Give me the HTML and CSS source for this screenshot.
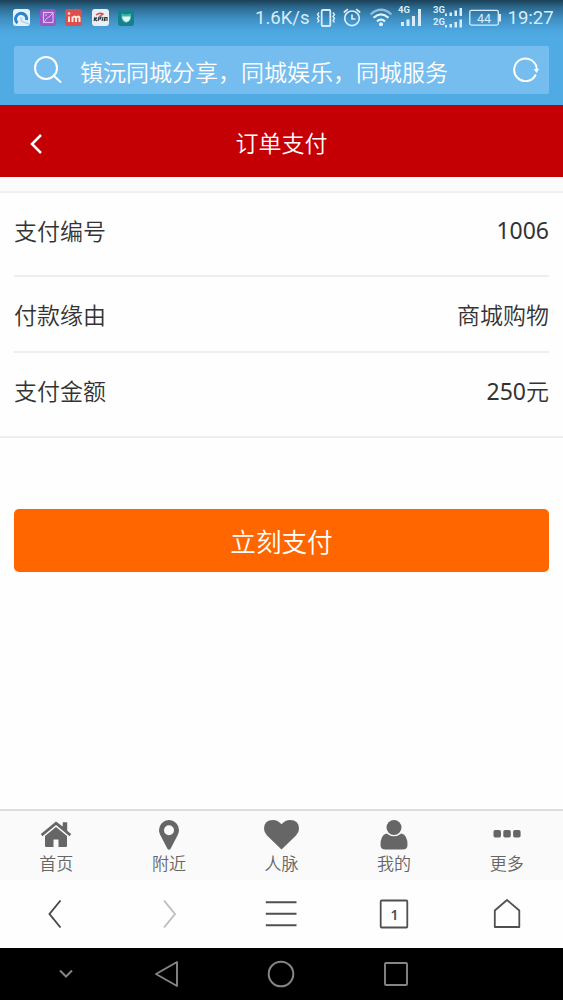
FILE: index.html
```html
<!DOCTYPE html>
<html lang="zh-CN">
<head>
<meta charset="utf-8">
<title>订单支付</title>
<link rel="stylesheet" href="styles.css">
</head>
<body>
<div class="phone">
  <header class="browser-top">
    <div class="status">
      <div class="apps">
        <svg width="17" height="17" viewBox="0 0 17 17"><rect width="17" height="17" rx="3" fill="#e4f1f9"/><path d="M4.500 14A5.500 5.500 0 1 1 13.500 11" fill="none" stroke="#2c83c9" stroke-width="3"/><path d="M8 8.500a4 4 0 0 0 4 5l4 1.500" fill="none" stroke="#a9d3ef" stroke-width="1.500"/></svg>
        <svg width="16" height="17" viewBox="0 0 16 17"><rect width="16" height="17" rx="3" fill="#9c55c8"/><rect x="3.500" y="3.500" width="9.500" height="10" fill="none" stroke="#deb9f0" stroke-width="1.200"/><path d="M4 13l3-4 2-1 4-4M5 6h2" fill="none" stroke="#deb9f0"/></svg>
        <svg width="17" height="17" viewBox="0 0 17 17"><rect width="17" height="17" rx="3" fill="#d9504f"/><path d="M4 7.500V13M7.500 13V7.500M7.500 9q2.500-3 3.500 0v4M11 9q3-3 3.500 0v4" fill="none" stroke="#ffe8df" stroke-width="2"/><circle cx="4" cy="4.500" r="1.200" fill="#ffe8df"/></svg>
        <svg width="17" height="17" viewBox="0 0 17 17"><rect width="17" height="17" rx="3" fill="#e9eff4"/><path d="M4 6q4-3 7-1l-3 2" fill="none" stroke="#d0494d" stroke-width="1.500"/><path d="M2 12l1-4m0 2.500 2-2m-2 2 2 1.500M6 12l1-4h2l-.5 2H7M10 12l1-4m2 0-1 4M13 12V8.500h2V12" fill="none" stroke="#28303a" stroke-width="1.100"/></svg>
        <svg width="16" height="17" viewBox="0 0 16 17"><rect width="16" height="17" rx="3" fill="#17808f"/><path d="M3.500 4.500 8 5.500l5-1V9q-1 4-5 5-4-1-4.500-5z" fill="#3fb7a8"/><path d="M4 7.500h8.500Q12 12.500 8 13 5 12 4 7.500z" fill="#e4f7f2"/></svg>
      </div>
      <span class="speed">1.6K/s</span>
      <svg class="vibrate" width="20" height="18" viewBox="0 0 20 18" fill="none" stroke="#d8edfa"><rect x="5.700" y="1" width="8.600" height="16" rx="1" stroke-width="1.800"/><path d="M3 3.500 1.500 5.500 3 7.500 1.500 9.500 3 11.500 1.500 13.500M17 3.500l1.500 2-1.500 2 1.500 2-1.500 2 1.500 2" stroke-width="1.400"/></svg>
      <svg class="alarm" width="18" height="19" viewBox="0 0 18 19" fill="none" stroke="#d8edfa" stroke-width="1.700"><circle cx="9" cy="10.300" r="7.300"/><path d="M9 6.500v4.500h3.500M.8 4.500l4-3.300M17.200 4.500l-4-3.300"/></svg>
      <svg class="wifi" width="24" height="19" viewBox="0 0 24 19" fill="none" stroke-width="2.200"><path d="M1.500 6.500Q12-3 22.500 6.500" stroke="#8fbddd"/><path d="M4.500 9.800Q12 3 19.500 9.800M8 13.300q4-3.500 8 0" stroke="#e4f4fd"/><circle cx="12" cy="16.200" r="2" fill="#e4f4fd"/></svg>
      <svg class="signal" width="25" height="24" viewBox="0 0 25 24" fill="#d8edfa"><text class="gen" x="0" y="9">4G</text><path d="M3 18h3v4H3zM8.500 15.500h3V22h-3zM14 12h3v10h-3zM20 5h3v17h-3z"/></svg>
      <svg class="dual" width="30" height="26" viewBox="0 0 30 26" fill="#d8edfa"><text class="gen" x="0" y="9">3G</text><text class="gen" x="0" y="20.500">2G</text><path d="M12 9.500h2V12h-2zM16.500 8.500h2.500V12h-2.500zM21.500 6.500H24V12h-2.500zM26.500 4H29v8h-2.500zM12 21h2v2.500h-2zM16.500 20h2.500v3.500h-2.500zM21.500 18H24v5.500h-2.500zM26.500 15.500H29v8h-2.500z"/></svg>
      <svg class="battery" width="33" height="18" viewBox="0 0 33 18"><rect x=".8" y="1.300" width="28.500" height="14.800" rx="1.500" fill="none" stroke="#d8edfa" stroke-width="1.300"/><path d="M31 5v7.500" stroke="#d8edfa" stroke-width="2"/><text class="charge" x="15" y="13.500">44</text></svg>
      <span class="clock">19:27</span>
    </div>
    <div class="search">
      <svg class="lens" width="30" height="30" viewBox="0 0 30 30" fill="none" stroke="#fff" stroke-width="2"><circle cx="13" cy="13" r="11"/><path d="M21 21l6.500 6" stroke-linecap="round"/></svg>
      <span class="query">镇沅同城分享，同城娱乐，同城服务</span>
      <svg class="reload" width="26" height="26" viewBox="0 0 26 26"><path d="M22.800 17.500A11.300 11.300 0 1 1 23.800 12.500" fill="none" stroke="#fff" stroke-width="1.900"/><path d="M20.800 12H26l-2.500 4z" fill="#fff"/></svg>
    </div>
  </header>
  <div class="title-bar">
    <svg class="back" width="14" height="22" viewBox="0 0 14 22" fill="none" stroke="#fff" stroke-width="2.500"><path d="M12 2 3 11l9 9"/></svg>
    <h1 class="title">订单支付</h1>
  </div>
  <main class="content">
    <div class="order">
      <div class="row row-id"><span>支付编号</span><span class="value">1006</span></div>
      <div class="row row-reason"><span>付款缘由</span><span>商城购物</span></div>
      <div class="row row-amount"><span>支付金额</span><span><span class="value">250</span>元</span></div>
    </div>
    <button class="pay">立刻支付</button>
  </main>
  <nav class="tabs">
    <div class="tab"><svg width="32" height="30" viewBox="0 0 32 30" fill="#666"><path d="M16 1.500 .8 14l1.600 2.200L16 5l13.600 11.200 1.600-2.200-4-3.300V2.300h-4.500v4.200z"/><path d="M16 7 5 16V26q0 1 1 1h7.500v-7.500h5V27H26q1 0 1-1V16z"/></svg><span>首页</span></div>
    <div class="tab"><svg width="20" height="30" viewBox="0 0 20 30"><path fill="#666" fill-rule="evenodd" d="M10 0A10 10 0 0 0 0 10q0 2.500 1 4.500l7.300 14q1.700 2.400 3.400 0l7.300-14q1-2 1-4.500A10 10 0 0 0 10 0zm0 5.200a5 5 0 1 1 0 10 5 5 0 0 1 0-10z"/></svg><span>附近</span></div>
    <div class="tab"><svg width="35" height="30" viewBox="0 0 35 30"><path fill="#666" d="M17.500 29.500 3 15.500Q0 12.500 0 8.800 0 0 9 0q4.800 0 8.500 4.300Q21.200 0 26 0q9 0 9 8.800 0 3.700-3 6.700z"/></svg><span>人脉</span></div>
    <div class="tab"><svg width="28" height="30" viewBox="0 0 28 30" fill="#666"><circle cx="14" cy="7.500" r="7.500"/><path d="M6.500 13.500Q14 19 21.500 13.500 27.500 15 27.500 25q0 4.500-5 4.500h-17q-5 0-5-4.500 0-10 6-11.500z"/></svg><span>我的</span></div>
    <div class="tab"><svg width="28" height="30" viewBox="0 0 28 30" fill="#666"><rect x=".5" y="10" width="7.500" height="7.500" rx="1.700"/><rect x="10.300" y="10" width="7.500" height="7.500" rx="1.700"/><rect x="20.100" y="10" width="7.500" height="7.500" rx="1.700"/></svg><span>更多</span></div>
  </nav>
  <nav class="tools">
    <svg class="tool" width="32" height="32" viewBox="0 0 32 32" fill="none" stroke="#484848" stroke-width="1.900"><path d="M20.500 2.500 9.500 16l11 13.500"/></svg>
    <svg class="tool" width="32" height="32" viewBox="0 0 32 32" fill="none" stroke="#bebebe" stroke-width="1.900"><path d="M11 2.500 22 16 11 29.500"/></svg>
    <svg class="tool" width="32" height="32" viewBox="0 0 32 32" fill="none" stroke="#505050" stroke-width="2"><path d="M.8 4.200h30.700M.8 15.700h30.700M.8 27.200h30.700"/></svg>
    <svg class="tool" width="32" height="32" viewBox="0 0 32 32"><rect x="2.700" y="2.500" width="26.600" height="27" rx="1" fill="none" stroke="#505050" stroke-width="1.800"/><text class="count" x="16.500" y="22">1</text></svg>
    <svg class="tool" width="32" height="32" viewBox="0 0 32 32" fill="none" stroke="#505050" stroke-width="1.800" stroke-linejoin="round"><path d="M3.800 12.500 16 2l12.300 10.500V29H3.800z"/></svg>
  </nav>
  <nav class="system">
    <svg width="14" height="10" viewBox="0 0 14 10" fill="none" stroke="#858585" stroke-width="2"><path d="M1 1.500l6 6 6-6"/></svg>
    <svg width="26" height="28" viewBox="0 0 26 28" fill="none" stroke="#858585" stroke-width="1.900" stroke-linejoin="round"><path d="M23 2v24L2 14z"/></svg>
    <svg width="28" height="28" viewBox="0 0 28 28" fill="none" stroke="#858585" stroke-width="2"><circle cx="14" cy="14" r="12.300"/></svg>
    <svg width="26" height="26" viewBox="0 0 26 26" fill="none" stroke="#858585" stroke-width="1.900"><rect x="2" y="2" width="22" height="22" rx="1"/></svg>
  </nav>
</div>
</body>
</html>
```
FILE: styles.css
```css
* { box-sizing: border-box; }
body { margin: 0; background: #fefefe; }
svg { display: block; flex: none; }
.phone {
  width: 563px;
  height: 1000px;
  display: flex;
  flex-direction: column;
  overflow: hidden;
  font-family: "Noto Sans CJK SC DemiLight", "Noto Sans CJK SC", sans-serif;
  font-size: 23px;
  font-weight: 350;
  color: #333;
}
.browser-top {
  height: 105px;
  flex: none;
  background: linear-gradient(#1c4158 0, #2d6b91 8px, #3e8dc0 18px, #4ca5df 30px, #50abe5 38px);
}
.status {
  height: 46px;
  padding-left: 13px;
  display: flex;
  align-items: flex-start;
  font-family: Roboto, sans-serif;
  font-weight: 400;
  color: #d8edfa;
}
.apps { display: flex; gap: 9.5px; padding-top: 9px; width: 242px; }
.speed { width: 61px; font-size: 18.5px; line-height: 37px; }
.vibrate { margin-top: 9px; }
.alarm { margin: 8px 0 0 7px; }
.wifi { margin: 8px 0 0 8px; }
.signal { margin: 4px 0 0 5px; }
.dual { margin: 4px 0 0 10px; }
.battery { margin: 9px 0 0 6px; }
.clock { margin-left: 5.5px; font-size: 18.5px; line-height: 37px; white-space: nowrap; }
.gen { font: 700 9.5px Roboto, sans-serif; }
.charge { font: 12.5px Roboto, sans-serif; fill: #d8edfa; text-anchor: middle; }
.search {
  height: 48px;
  margin: 0 14px;
  padding: 0 10px 0 19px;
  display: flex;
  align-items: center;
  background: #75bdef;
  border-radius: 2px;
  color: #fff;
}
.query { flex: 1; margin-left: 17px; padding-top: 1px; line-height: 48px; white-space: nowrap; }
.title-bar {
  height: 72px;
  flex: none;
  display: grid;
  grid-template-columns: 60px 1fr 60px;
  align-items: center;
  background: #c40004;
  color: #fff;
}
.back { margin: 4px 0 0 29px; }
.title { margin: 0; font-size: 23px; font-weight: inherit; line-height: 72px; text-align: center; padding-top: 1px; }
.content { flex: 1; display: flex; flex-direction: column; border-top: 14px solid #fafbfa; }
.order { padding: 0 14px; border-top: 2px solid #edf1f3; border-bottom: 2px solid #eee; }
.row { display: flex; justify-content: space-between; line-height: 34px; }
.row-id { height: 84px; padding-top: 20px; border-bottom: 2px solid #eee; }
.row-reason { height: 76px; padding-top: 20px; border-bottom: 2px solid #eee; }
.row-amount { height: 83px; padding-top: 20px; }
.value { font-family: "Noto Sans", sans-serif; font-weight: 400; }
.pay {
  height: 63px;
  margin: 71px 14px 0;
  padding: 0;
  border: 0;
  border-radius: 5px;
  background: #f60;
  color: #fff;
  font-family: inherit;
  font-weight: inherit;
  font-size: 25.6px;
}
.tabs {
  height: 71px;
  flex: none;
  display: grid;
  grid-template-columns: repeat(5, 1fr);
  background: #fafafa;
  border-top: 2px solid #ddd;
}
.tab {
  display: flex;
  flex-direction: column;
  align-items: center;
  padding-top: 9px;
  font-size: 17px;
  line-height: 26px;
  color: #666;
}
.tools {
  height: 68px;
  flex: none;
  display: grid;
  grid-template-columns: repeat(5, 1fr);
  place-items: center;
  background: #fefefe;
}
.count { font: 600 14px "Noto Sans", sans-serif; fill: #505050; text-anchor: middle; }
.system {
  height: 52px;
  flex: none;
  display: grid;
  grid-template-columns: 101px 101px 127px 103px;
  padding-left: 15.5px;
  place-items: center;
  justify-content: start;
  background: #000;
}
```
